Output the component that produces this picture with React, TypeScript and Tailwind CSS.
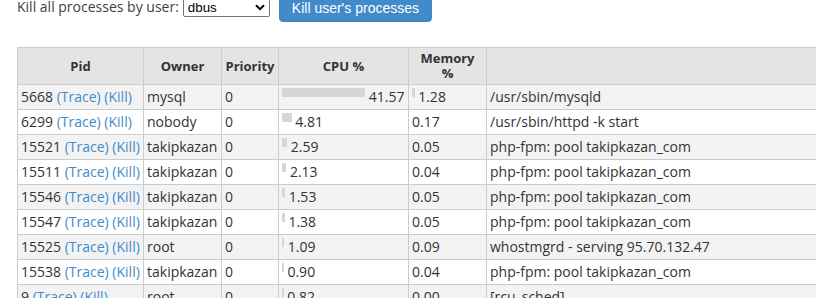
import React from "react";

type Row = {
  pid: string;
  owner: string;
  cpu: number;
  mem: number;
  cmd: string;
};

const rows: Row[] = [
  { pid: "5668", owner: "mysql", cpu: 41.57, mem: 1.28, cmd: "/usr/sbin/mysqld" },
  { pid: "6299", owner: "nobody", cpu: 4.81, mem: 0.17, cmd: "/usr/sbin/httpd -k start" },
  { pid: "15521", owner: "takipkazan", cpu: 2.59, mem: 0.05, cmd: "php-fpm: pool takipkazan_com" },
  { pid: "15511", owner: "takipkazan", cpu: 2.13, mem: 0.04, cmd: "php-fpm: pool takipkazan_com" },
  { pid: "15546", owner: "takipkazan", cpu: 1.53, mem: 0.05, cmd: "php-fpm: pool takipkazan_com" },
  { pid: "15547", owner: "takipkazan", cpu: 1.38, mem: 0.05, cmd: "php-fpm: pool takipkazan_com" },
  { pid: "15525", owner: "root", cpu: 1.09, mem: 0.09, cmd: "whostmgrd - serving 95.70.132.47" },
  { pid: "15538", owner: "takipkazan", cpu: 0.9, mem: 0.04, cmd: "php-fpm: pool takipkazan_com" },
  { pid: "9", owner: "root", cpu: 0.82, mem: 0.0, cmd: "[rcu_sched]" },
];

function Bar({ value }: { value: number }) {
  const w = value * 2;
  if (w < 1) return null;
  return (
    <>
      <span
        className="inline-block align-top mt-[1px] h-[9px] bg-[#d6d6d6]"
        style={{ width: `${w}px` }}
      />{" "}
    </>
  );
}

export default function App() {
  return (
    <div
      className="w-[816px] h-[298px] overflow-hidden bg-white text-[#333] pl-[17px]"
      style={{ fontFamily: '"Open Sans", sans-serif' }}
    >
      <div className="flex items-start h-[22px]">
        <span className="text-[14px] leading-[20px] -mt-[3px] text-[#3f3f3f]">
          Kill all processes by user:
        </span>
        <div
          className="ml-[4px] -mt-[5px] h-[22px] w-[87px] border border-[#767676] rounded-[2px] bg-white flex items-end pl-[4px] pr-[4px] text-black"
          style={{ fontFamily: '"Liberation Sans", Arial, sans-serif' }}
        >
          <span className="text-[13.33px] leading-[16px]">dbus</span>
          <svg
            className="ml-auto mb-[5px]"
            width="10"
            height="7"
            viewBox="0 0 10 7"
          >
            <path d="M1 1.2 L5 5.2 L9 1.2" fill="none" stroke="#000" strokeWidth="2" />
          </svg>
        </div>
        <button
          className="ml-[9px] -mt-[6px] h-[28px] px-[12px] rounded-[4px] bg-[#428bca] border border-[#3f86c4] text-white text-[14px] leading-[20px] flex items-center"
          style={{ fontFamily: '"Liberation Sans", Arial, sans-serif' }}
        >
          Kill user's processes
        </button>
      </div>

      <table className="mt-[25px] border-collapse table-fixed w-[900px]">
        <colgroup>
          <col className="w-[126px]" />
          <col className="w-[78px]" />
          <col className="w-[57px]" />
          <col className="w-[130px]" />
          <col className="w-[78px]" />
          <col />
        </colgroup>
        <thead>
          <tr className="bg-[#e4e4e4]">
            {["Pid", "Owner", "Priority", "CPU %"].map((h) => (
              <th
                key={h}
                className="border border-[#cccccc] px-[3px] py-[3px] text-[13px] leading-[15px] font-bold text-center align-middle"
              >
                {h}
              </th>
            ))}
            <th className="border border-[#cccccc] px-[3px] py-[3px] text-[13px] leading-[15px] font-bold text-center align-middle">
              Memory
              <br />%
            </th>
            <th className="border border-[#cccccc] px-[3px] py-[3px]" />
          </tr>
        </thead>
        <tbody>
          {rows.map((r, i) => (
            <tr key={i} className={i % 2 === 0 ? "bg-[#f3f3f3]" : "bg-white"}>
              <td className="border border-[#cccccc] px-[3px] py-[2px] text-[14px] leading-[20px] whitespace-nowrap">
                {r.pid} <span className="text-[#428bca]">(Trace)</span>{" "}
                <span className="text-[#428bca]">(Kill)</span>
              </td>
              <td className="border border-[#cccccc] px-[3px] py-[2px] text-[14px] leading-[20px] whitespace-nowrap">
                {r.owner}
              </td>
              <td className="border border-[#cccccc] px-[3px] py-[2px] text-[14px] leading-[20px]">
                0
              </td>
              <td className="border border-[#cccccc] px-[3px] py-[2px] text-[14px] leading-[20px] whitespace-nowrap">
                <Bar value={r.cpu} />
                {r.cpu.toFixed(2)}
              </td>
              <td className="border border-[#cccccc] px-[3px] py-[2px] text-[14px] leading-[20px] whitespace-nowrap">
                <Bar value={r.mem} />
                {r.mem.toFixed(2)}
              </td>
              <td className="border border-[#cccccc] px-[3px] py-[2px] text-[14px] leading-[20px] whitespace-nowrap">
                {r.cmd}
              </td>
            </tr>
          ))}
        </tbody>
      </table>
    </div>
  );
}
